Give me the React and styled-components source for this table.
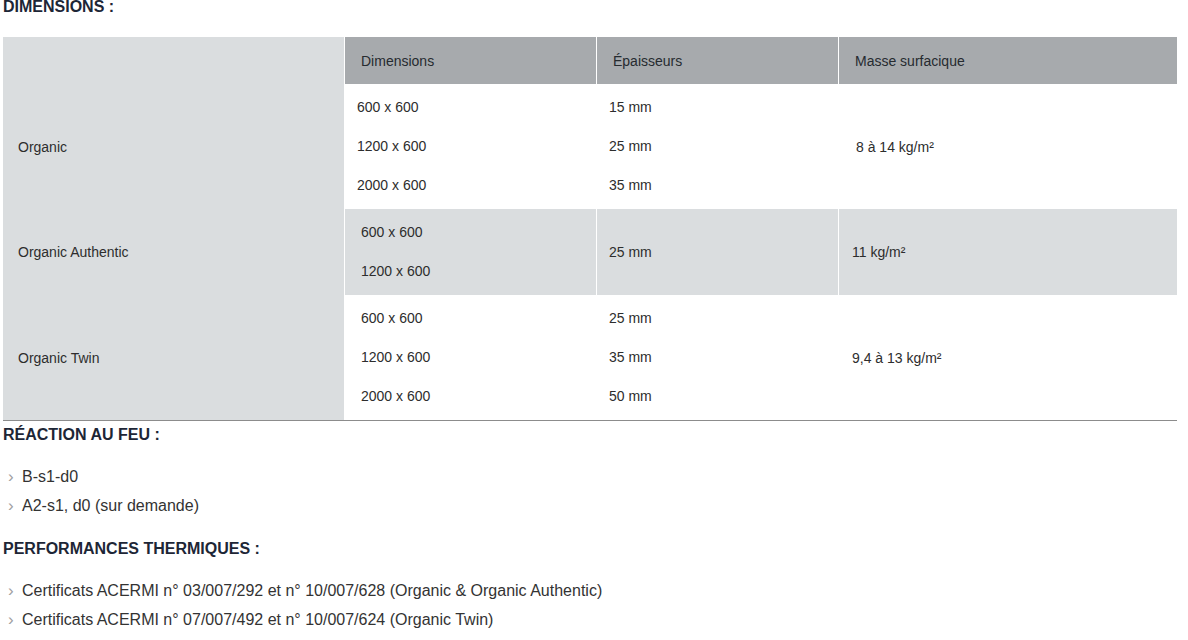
import React from "react";
import styled, { createGlobalStyle } from "styled-components";

const Global = createGlobalStyle`
  html, body { margin: 0; padding: 0; background: #fff; }
  body { font-family: "Liberation Sans", Arial, sans-serif; color: #333; }
`;

const Page = styled.div`
  padding: 0 11px 0 3px;
  margin-top: -3px;
`;

const Heading = styled.h3`
  margin: ${(p) => (p.$after ? "4px 0 0" : "0")};
  font-size: 16px;
  line-height: 19px;
  font-weight: 700;
  color: #1d2636;
`;

const Table = styled.div`
  display: grid;
  grid-template-columns: 341px 251px 241px 338px;
  column-gap: 1px;
  width: 1174px;
  margin-top: 21px;
  background: #fff;
  border-bottom: 1px solid #8c8c8c;
  font-size: 14px;
  color: #2d2d2d;
`;

const Cell = styled.div`
  display: flex;
  flex-direction: column;
  justify-content: center;
  padding: ${(p) => (p.$head ? "0" : "4px")} 8px ${(p) => (p.$head ? "0" : "4px")} ${(p) => p.$pad}px;
  height: ${(p) => p.$h}px;
  box-sizing: border-box;
  background: ${(p) =>
    p.$tone === "head" ? "#a7aaad" : p.$tone === "light" ? "#dadddf" : "#ffffff"};
  color: ${(p) => (p.$tone === "head" ? "#262b30" : "#2d2d2d")};
`;

const Line = styled.div`
  line-height: 39px;
  white-space: nowrap;
`;

const List = styled.ul`
  list-style: none;
  margin: 18px 0 19px;
  padding: 0;
`;

const Item = styled.li`
  position: relative;
  padding-left: 19px;
  font-size: 16px;
  line-height: 29px;
  color: #333;
  &::before {
    content: "›";
    position: absolute;
    left: 5px;
    top: 0;
    font-size: 17px;
    color: #a0a0a0;
  }
`;

const rows = [
  {
    name: "Organic",
    h: 125,
    tone: "white",
    dims: ["600 x 600", "1200 x 600", "2000 x 600"],
    thick: ["15 mm", "25 mm", "35 mm"],
    mass: "8 à 14 kg/m²",
    pads: [12, 12, 17],
  },
  {
    name: "Organic Authentic",
    h: 86,
    tone: "light",
    dims: ["600 x 600", "1200 x 600"],
    thick: ["25 mm"],
    mass: "11 kg/m²",
    pads: [16, 12, 13],
  },
  {
    name: "Organic Twin",
    h: 125,
    tone: "white",
    dims: ["600 x 600", "1200 x 600", "2000 x 600"],
    thick: ["25 mm", "35 mm", "50 mm"],
    mass: "9,4 à 13 kg/m²",
    pads: [16, 12, 13],
  },
];

export default function App() {
  return (
    <>
      <Global />
      <Page>
        <Heading>DIMENSIONS :</Heading>
        <Table>
          <Cell $tone="light" $h={47} $pad={15} $head />
          <Cell $tone="head" $h={47} $pad={16} $head>Dimensions</Cell>
          <Cell $tone="head" $h={47} $pad={16} $head>Épaisseurs</Cell>
          <Cell $tone="head" $h={47} $pad={16} $head>Masse surfacique</Cell>
          {rows.map((r) => (
            <React.Fragment key={r.name}>
              <Cell $tone="light" $h={r.h} $pad={15}>{r.name}</Cell>
              <Cell $tone={r.tone} $h={r.h} $pad={r.pads[0]}>
                {r.dims.map((d) => (
                  <Line key={d}>{d}</Line>
                ))}
              </Cell>
              <Cell $tone={r.tone} $h={r.h} $pad={r.pads[1]}>
                {r.thick.map((d) => (
                  <Line key={d}>{d}</Line>
                ))}
              </Cell>
              <Cell $tone={r.tone} $h={r.h} $pad={r.pads[2]}>{r.mass}</Cell>
            </React.Fragment>
          ))}
        </Table>
        <Heading $after>RÉACTION AU FEU :</Heading>
        <List>
          <Item>B-s1-d0</Item>
          <Item>A2-s1, d0 (sur demande)</Item>
        </List>
        <Heading>PERFORMANCES THERMIQUES :</Heading>
        <List>
          <Item>Certificats ACERMI n° 03/007/292 et n° 10/007/628 (Organic &amp; Organic Authentic)</Item>
          <Item>Certificats ACERMI n° 07/007/492 et n° 10/007/624 (Organic Twin)</Item>
        </List>
      </Page>
    </>
  );
}
